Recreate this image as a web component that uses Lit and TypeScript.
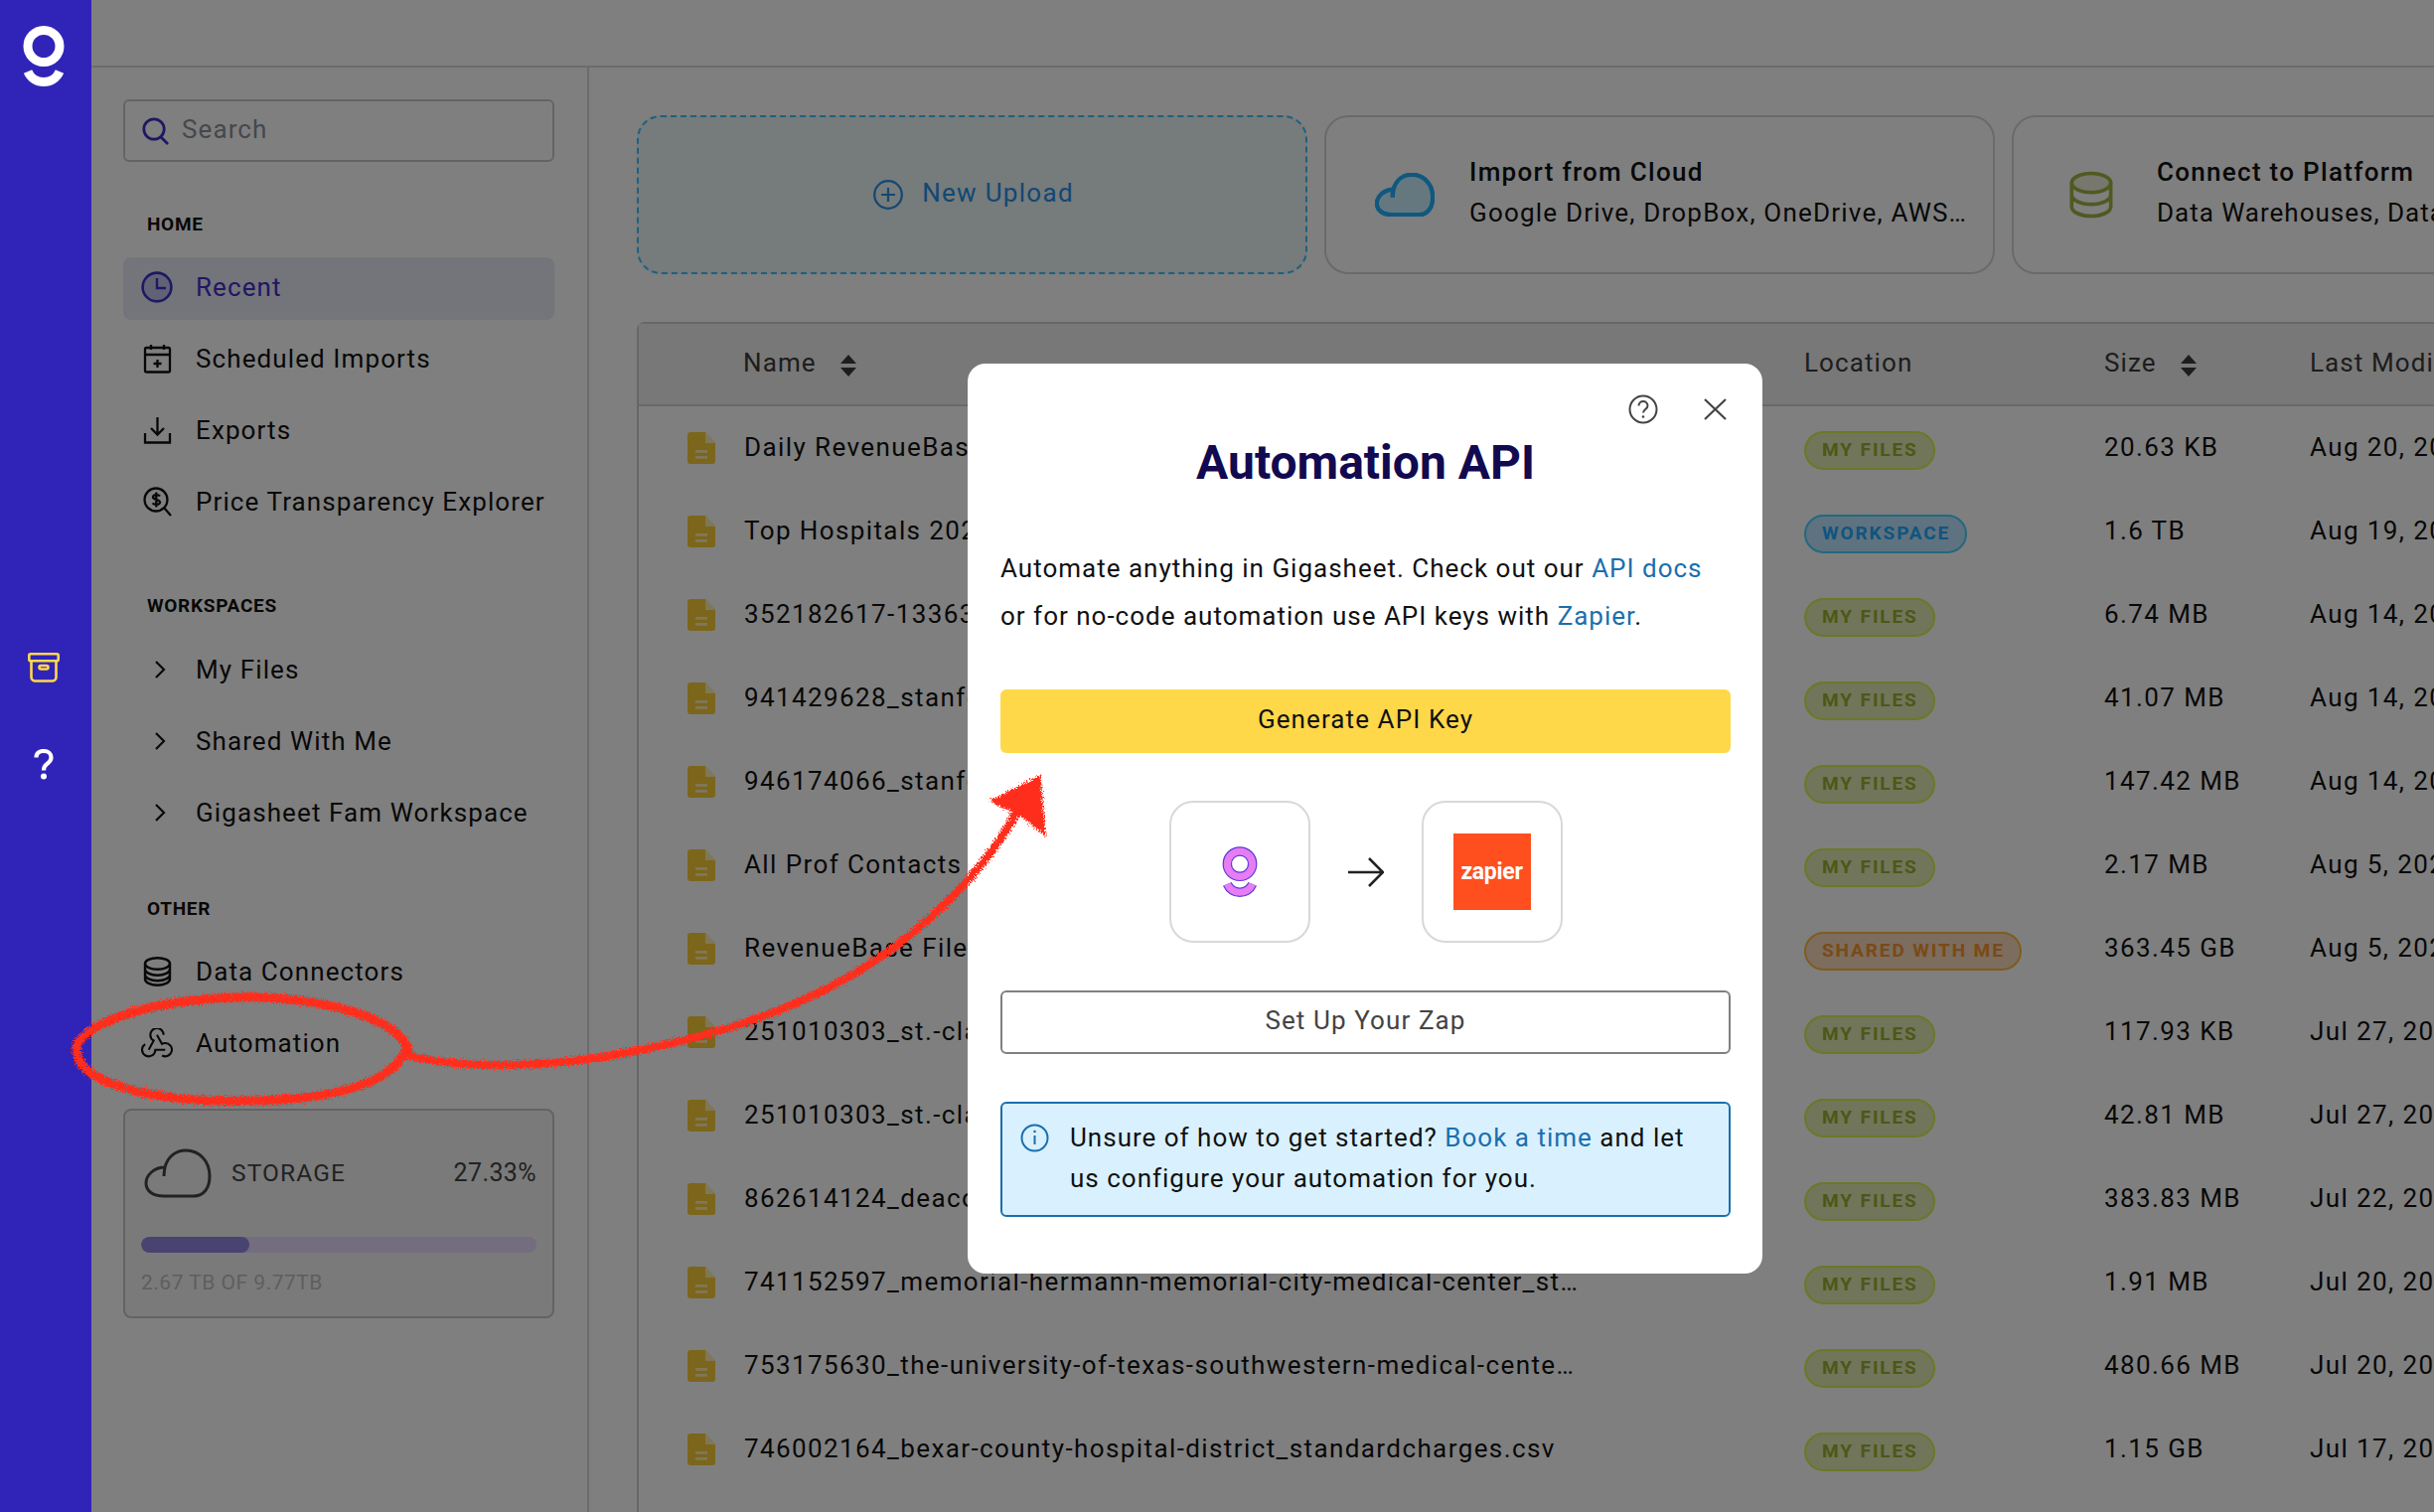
import { LitElement, css, html, svg } from "lit";
import { customElement } from "lit/decorators.js";

const rows = [
  ["Daily RevenueBase Files Summary.csv", "MY FILES", "20.63 KB", "Aug 20, 2024"],
  ["Top Hospitals 2024 Standard Charges.csv", "WORKSPACE", "1.6 TB", "Aug 19, 2024"],
  ["352182617-13363-hospital_standardcharges.csv", "MY FILES", "6.74 MB", "Aug 14, 2024"],
  ["941429628_stanford-health-care_standardcharges.csv", "MY FILES", "41.07 MB", "Aug 14, 2024"],
  ["946174066_stanford-hospital_standardcharges.csv", "MY FILES", "147.42 MB", "Aug 14, 2024"],
  ["All Prof Contacts - RevenueBase.csv", "MY FILES", "2.17 MB", "Aug 5, 2024"],
  ["RevenueBase Files", "SHARED WITH ME", "363.45 GB", "Aug 5, 2024"],
  ["251010303_st.-clair-hospital_standardcharges.csv", "MY FILES", "117.93 KB", "Jul 27, 2024"],
  ["251010303_st.-clair-hospital_charges.csv", "MY FILES", "42.81 MB", "Jul 27, 2024"],
  ["862614124_deaconess-hospital_standardcharges.csv", "MY FILES", "383.83 MB", "Jul 22, 2024"],
  ["741152597_memorial-hermann-memorial-city-medical-center_standardcharges.csv", "MY FILES", "1.91 MB", "Jul 20, 2024"],
  ["753175630_the-university-of-texas-southwestern-medical-center_standardcharges.csv", "MY FILES", "480.66 MB", "Jul 20, 2024"],
  ["746002164_bexar-county-hospital-district_standardcharges.csv", "MY FILES", "1.15 GB", "Jul 17, 2024"],
];

const pillClass: Record<string, string> = {
  "MY FILES": "pill olive",
  WORKSPACE: "pill blue",
  "SHARED WITH ME": "pill orange",
};

const clockIcon = html`<svg class="ic" width="32" height="32" viewBox="0 0 32 32"><circle cx="16" cy="16" r="14.4" fill="#c4c4ea" stroke="currentColor" stroke-width="2.6"/><path d="M16 7v10h9" fill="none" stroke="currentColor" stroke-width="2.4"/></svg>`;
const calendarIcon = html`<svg class="ic" width="32" height="30" viewBox="0 0 32 30" fill="none" stroke="currentColor" stroke-width="2.3"><rect x="4" y="4" width="25" height="24.5" rx="1.5"/><path d="M4 11h25M10 1v5M23 1v5M16.5 16v8M12.5 20h8"/></svg>`;
const exportIcon = html`<svg class="ic" width="32" height="28" viewBox="0 0 32 28" fill="none" stroke="currentColor" stroke-width="2.3"><path d="M4 17v9.5h25V17M16.5 1v17M10 12l6.5 6.5L23 12"/></svg>`;
const priceIcon = html`<svg class="ic" width="32" height="30" viewBox="0 0 32 30" fill="none" stroke="currentColor" stroke-width="2.3"><circle cx="15" cy="13" r="11.5"/><path d="M23 21l7 8"/><path d="M19 9.5c-1-1.6-6.6-2.2-7 .8-.4 3 7.2 2.2 7 5.4-.2 2.8-6 2.6-7.4.6M15.3 5.5v15"/></svg>`;
const chevron = html`<svg class="ic" width="32" height="20" viewBox="0 0 32 20" fill="none" stroke="currentColor" stroke-width="2.2"><path d="M15 2l8 8-8 8"/></svg>`;
const dbIcon = html`<svg class="ic" width="32" height="30" viewBox="0 0 32 30" fill="none" stroke="currentColor" stroke-width="2.4"><ellipse cx="16.5" cy="7" rx="12.5" ry="5.8"/><path d="M4 7v15.5c0 3.6 5.6 6.2 12.5 6.2S29 26.100 29 22.500V7M4 12.500c0 3.600 5.600 6.200 12.500 6.200S29 16.100 29 12.500M4 18c0 3.600 5.600 6.200 12.500 6.200S29 21.600 29 18"/></svg>`;
const hookIcon = html`<svg class="ic" width="32" height="30" viewBox="3 4 18 18" fill="none" stroke="currentColor" stroke-width="1.25"><path d="M4.876 13.61a4 4 0 1 0 6.124 3.39h6"/><path d="M15.066 20.502a4 4 0 1 0 1.934 -7.502c-.706 0 -1.424 .179 -2 .5l-3 -5.5"/><path d="M16 8a4 4 0 1 0 -8 0c0 1.506 .77 2.818 2 3.5l-3 5.5"/></svg>`;
const sortIcon = html`<svg class="sort" width="18" height="22" viewBox="0 0 18 22" fill="currentColor"><path d="M9 0l8 9H1zM9 22l-8-9h16z"/></svg>`;
const docIcon = html`<svg class="doc" width="28" height="32" viewBox="0 0 28 32"><path d="M3 0h15l10 11v18a3 3 0 0 1-3 3H3a3 3 0 0 1-3-3V3a3 3 0 0 1 3-3z" fill="#f8cc38"/><path d="M18 0v11h10z" fill="#fff0b0"/><path d="M8 18h12v2.800H8zM8 24h12v2.800H8z" fill="#fff0b0"/></svg>`;

const cloudPath = "M20 48H50C60 48 66 40 66 28C66 12 55 2 42 2C32 2 24 8 21 19C10 19 2 27 2 35C2 43 9 48 20 48ZM21 19C20.500 22 20 25 20 28";

const logo = (ring: string, outline?: string) => svg`
  ${outline
    ? svg`<circle cx="21" cy="20.500" r="16" fill="none" stroke=${outline} stroke-width="12"/>
          <path d="M5 46C11 60 31 60 37 46" fill="none" stroke=${outline} stroke-width="12"/>`
    : ""}
  <circle cx="21" cy="20.500" r="16" fill="none" stroke=${ring} stroke-width="9"/>
  <path d="M5 46C11 60 31 60 37 46" fill="none" stroke=${ring} stroke-width="9"/>`;

@customElement("app-root")
export class AppRoot extends LitElement {
  static styles = css`
    :host {
      display: block;
      font-family: "Roboto", "Open Sans", sans-serif;
      color: #111;
    }
    * {
      box-sizing: border-box;
    }
    .page {
      position: relative;
      display: flex;
      width: 2450px;
      height: 1522px;
      overflow: hidden;
      background: #fff;
      font-size: 26px;
      letter-spacing: 1.1px;
    }

    /* left rail */
    .rail {
      width: 92px;
      flex: none;
      background: #3024b8;
      display: flex;
      flex-direction: column;
      align-items: center;
      padding: 26px 4px 0 0;
    }
    .rail .archive {
      margin-top: 570px;
      color: #ffd84a;
    }
    .rail .help {
      margin-top: 67px;
    }

    .content {
      position: relative;
      flex: 1;
      min-width: 0;
      display: flex;
      flex-direction: column;
    }
    .topbar {
      height: 68px;
      flex: none;
      border-bottom: 2px solid #d8d8d8;
    }
    .body {
      flex: 1;
      display: flex;
      min-height: 0;
    }

    /* sidebar */
    .side {
      width: 501px;
      flex: none;
      border-right: 2px solid #d8d8d8;
      padding: 32px 33px 0 32px;
    }
    .search {
      height: 63px;
      border: 2px solid #c9c9c9;
      border-radius: 6px;
      display: flex;
      align-items: center;
      gap: 13px;
      padding: 0 0 3px 17px;
      color: #8d8f9a;
    }
    .search svg {
      color: #3f30c8;
      margin-top: 3px;
    }
    .sec {
      font-size: 19px;
      font-weight: 700;
      letter-spacing: 0.7px;
      line-height: 24px;
      padding-left: 24px;
      color: #111;
    }
    .sec.home {
      margin-top: 51px;
    }
    .sec.work {
      margin-top: 60px;
    }
    .sec.other {
      margin-top: 52px;
    }
    .nav {
      display: flex;
      flex-direction: column;
      gap: 9px;
      margin-top: 21px;
    }
    .sec.work + .nav {
      margin-top: 22px;
    }
    .row {
      height: 63px;
      display: flex;
      align-items: center;
      gap: 23px;
      padding: 0 0 3px 18px;
      border-radius: 8px;
      white-space: nowrap;
    }
    .row.on {
      background: #e8e8f6;
      color: #3f30c8;
    }
    .ic {
      flex: none;
    }
    .storage {
      height: 211px;
      margin-top: 33px;
      border: 2px solid #c6c6c6;
      border-radius: 8px;
      background: #f5f5f5;
      padding: 38px 16px 0;
    }
    .storage .head {
      display: flex;
      align-items: center;
      height: 50px;
      padding-bottom: 2px;
      color: #444;
      font-size: 24.5px;
    }
    .storage .head svg {
      margin: 2px 20px 0 3px;
    }
    .storage .pct {
      margin-left: auto;
      font-size: 25px;
      letter-spacing: 0.4px;
    }
    .track {
      height: 16px;
      margin-top: 39px;
      border-radius: 8px;
      background: #e8d8ff;
      overflow: hidden;
    }
    .fill {
      height: 100%;
      border-radius: 8px;
      background: #9086e0;
    }
    .used {
      margin-top: 18px;
      line-height: 24px;
      font-size: 21px;
      color: #bdbdbd;
      letter-spacing: 0.5px;
    }

    /* main area */
    .main {
      flex: 1;
      min-width: 0;
      overflow: hidden;
      padding: 48px 0 0 48px;
    }
    .cards {
      display: flex;
      gap: 17px;
      width: 2000px;
    }
    .card {
      width: 675px;
      height: 160px;
      flex: none;
      border: 2px solid #d4d4d4;
      border-radius: 24px;
      display: flex;
      align-items: center;
      white-space: nowrap;
    }
    .card.upload {
      background: #ecf6f7;
      border: 2px dashed #3cc0ff;
      justify-content: center;
      gap: 19px;
      padding: 0 0 5px 3px;
      letter-spacing: 1.3px;
      color: #2490e8;
    }
    .card.upload svg {
      margin-top: 4px;
    }
    .card .txt {
      min-width: 0;
      display: flex;
      flex-direction: column;
      gap: 11px;
      line-height: 30px;
      padding-bottom: 6px;
    }
    .card .txt b {
      font-weight: 500;
      letter-spacing: 1.3px;
    }
    .card .txt span {
      letter-spacing: 1px;
    }
    .card .txt .ell {
      width: 503px;
      overflow: hidden;
      text-overflow: ellipsis;
      letter-spacing: 1.2px;
    }
    .card.cloud svg {
      margin-left: 49px;
      margin-right: 35px;
      color: #20b0ff;
    }
    .card.conn svg {
      margin-left: 56px;
      margin-right: 44px;
      color: #9eb440;
    }
    .table {
      width: 2000px;
      height: 1300px;
      margin-top: 48px;
      border: solid #cfcfcf;
      border-width: 2px 0 0 2px;
      border-top-left-radius: 8px;
      letter-spacing: 1.4px;
    }
    .thead,
    .trow {
      display: grid;
      grid-template-columns: 1173px 302px 207px 1fr;
      align-items: center;
    }
    .thead {
      height: 83px;
      background: #f0f0f0;
      border-bottom: 2px solid #d0d0d0;
      color: #3a3a3a;
      letter-spacing: 1.1px;
    }
    .thead .name {
      padding-left: 105px;
    }
    .thead span {
      display: flex;
      align-items: center;
      padding-bottom: 3px;
    }
    .sort {
      margin: 5px 0 0 23px;
    }
    .trow {
      height: 84px;
    }
    .cell-name {
      display: flex;
      align-items: center;
      gap: 29px;
      padding-left: 49px;
    }
    .doc {
      flex: none;
    }
    .fname {
      width: 844px;
      white-space: nowrap;
      overflow: hidden;
      text-overflow: ellipsis;
      padding-bottom: 3px;
    }
    .sz {
      padding-bottom: 3px;
    }
    .where {
      padding-top: 4px;
    }
    .pill {
      display: inline-block;
      height: 39px;
      line-height: 33px;
      padding: 0 15px 0 16px;
      border: 2px solid;
      border-radius: 20px;
      font-size: 19px;
      font-weight: 700;
      letter-spacing: 1.9px;
      white-space: nowrap;
    }
    .olive {
      color: #9aaf30;
      border-color: #d8f04c;
      background: #e2eab4;
    }
    .blue {
      color: #20aaff;
      border-color: #44d2ff;
      background: #bfe4ff;
    }
    .orange {
      color: #f4942e;
      border-color: #ffb83c;
      background: #f8dabc;
    }
    .date {
      white-space: nowrap;
      padding-bottom: 3px;
    }

    /* modal */
    .overlay {
      position: absolute;
      inset: 0;
      background: rgba(0, 0, 0, 0.5);
    }
    .modal {
      position: absolute;
      left: 882px;
      top: 366px;
      width: 800px;
      height: 916px;
      background: #fff;
      border-radius: 18px;
      padding: 0 32px 0 33px;
      color: #111;
      letter-spacing: 1.1px;
    }
    .tools {
      position: absolute;
      top: 31px;
      right: 36px;
      display: flex;
      align-items: center;
      gap: 46px;
      color: #444;
    }
    .modal h2 {
      margin: 0;
      padding-top: 72px;
      text-align: center;
      font-size: 48px;
      line-height: 56px;
      font-weight: 700;
      letter-spacing: 0;
      color: #120a50;
    }
    .modal p {
      margin: 54px 0 0;
      font-size: 26px;
      line-height: 48px;
      letter-spacing: 1px;
      white-space: nowrap;
    }
    a {
      color: #1a6fae;
      text-decoration: none;
    }
    .btn {
      height: 64px;
      display: flex;
      align-items: center;
      justify-content: center;
      border-radius: 6px;
      padding-bottom: 4px;
    }
    .btn.gen {
      margin-top: 50px;
      background: #ffd84a;
    }
    .btn.zap {
      margin-top: 48px;
      border: 2px solid #808080;
      color: #444;
    }
    .flow {
      display: flex;
      justify-content: center;
      align-items: center;
      gap: 38px;
      margin-top: 48px;
    }
    .tile {
      width: 142px;
      height: 143px;
      border: 2px solid #d8d8d8;
      border-radius: 24px;
      display: flex;
      align-items: center;
      justify-content: center;
    }
    .zapier {
      width: 78px;
      height: 77px;
      background: #ff4f1f;
      color: #fff;
      display: flex;
      align-items: center;
      justify-content: center;
      font-size: 23px;
      font-weight: 700;
      letter-spacing: -0.3px;
    }
    .info {
      display: flex;
      gap: 21px;
      height: 116px;
      margin-top: 48px;
      padding: 14px 18px 0;
      border: 2px solid #1a6fae;
      border-radius: 6px;
      background: #d9f1fe;
      line-height: 41px;
      letter-spacing: 1px;
    }
    .info svg {
      flex: none;
      margin-top: 6px;
      color: #1a6fae;
    }

    .scribble {
      position: absolute;
      inset: 0;
      pointer-events: none;
    }
  `;

  render() {
    return html`
      <div class="page">
        <nav class="rail">
          <svg width="42" height="61" viewBox="0 0 42 61">${logo("#fff")}</svg>
          <svg class="archive" width="32" height="30" viewBox="0 0 32 30" fill="none" stroke="currentColor" stroke-width="2.6">
            <rect x="1.300" y="1.300" width="29.400" height="7" rx="1.500"/>
            <path d="M3.500 8.500v16a4 4 0 0 0 4 4h17a4 4 0 0 0 4-4v-16"/>
            <rect x="11.500" y="13" width="9" height="3.500" rx="1.700"/>
          </svg>
          <svg class="help" width="20" height="31" viewBox="0 0 20 31" fill="none">
            <path d="M2.500 8.500C2.500 4 5.500 2 9.800 2C14.500 2 17.500 4.500 17.500 8.500C17.500 12 15 13.500 13 15.200C11 16.800 10 18 10 21.500" stroke="#fff" stroke-width="4.200"/>
            <circle cx="10" cy="27.500" r="3" fill="#fff"/>
          </svg>
        </nav>

        <div class="content">
          <div class="topbar"></div>
          <div class="body">
            <aside class="side">
              <div class="search">
                <svg width="27" height="28" viewBox="0 0 27 28" fill="none" stroke="currentColor" stroke-width="2.800"><circle cx="12" cy="12" r="10.200"/><path d="M19 20l7 7"/></svg>
                Search
              </div>
              <div class="sec home">HOME</div>
              <div class="nav">
                <div class="row on">${clockIcon}Recent</div>
                <div class="row">${calendarIcon}Scheduled Imports</div>
                <div class="row">${exportIcon}Exports</div>
                <div class="row">${priceIcon}Price Transparency Explorer</div>
              </div>
              <div class="sec work">WORKSPACES</div>
              <div class="nav">
                <div class="row">${chevron}My Files</div>
                <div class="row">${chevron}Shared With Me</div>
                <div class="row">${chevron}Gigasheet Fam Workspace</div>
              </div>
              <div class="sec other">OTHER</div>
              <div class="nav">
                <div class="row">${dbIcon}Data Connectors</div>
                <div class="row">${hookIcon}Automation</div>
              </div>
              <div class="storage">
                <div class="head">
                  <svg width="68" height="50" viewBox="0 0 68 50" fill="none" stroke="currentColor" stroke-width="3"><path d=${cloudPath}/></svg>
                  STORAGE
                  <span class="pct">27.33%</span>
                </div>
                <div class="track"><div class="fill" style="width: 27.33%"></div></div>
                <div class="used">2.67 TB OF 9.77TB</div>
              </div>
            </aside>

            <main class="main">
              <div class="cards">
                <div class="card upload">
                  <svg width="30" height="30" viewBox="0 0 30 30" fill="none" stroke="currentColor" stroke-width="2.200"><circle cx="15" cy="15" r="13.800"/><path d="M15 8v14M8 15h14"/></svg>
                  New Upload
                </div>
                <div class="card cloud">
                  <svg width="60" height="44" viewBox="0 0 68 50" fill="#ccf0ff" stroke="currentColor" stroke-width="5"><path d=${cloudPath}/></svg>
                  <div class="txt"><b>Import from Cloud</b><span class="ell">Google Drive, DropBox, OneDrive, AWS, Azure, Box and more</span></div>
                </div>
                <div class="card conn">
                  <svg width="48" height="52" viewBox="0 0 48 52" fill="none" stroke="currentColor" stroke-width="4">
                    <ellipse cx="24" cy="13" rx="21.500" ry="10.500" fill="#eeeedd"/>
                    <path d="M2.500 13v26c0 6 9.600 10.500 21.500 10.500S45.500 45 45.500 39V13M2.500 26c0 6 9.600 10.500 21.500 10.500S45.500 32 45.500 26"/>
                  </svg>
                  <div class="txt"><b>Connect to Platform</b><span>Data Warehouses, Databases, CRMs and more</span></div>
                </div>
              </div>

              <div class="table">
                <div class="thead">
                  <span class="name">Name${sortIcon}</span>
                  <span>Location</span>
                  <span>Size${sortIcon}</span>
                  <span>Last Modified</span>
                </div>
                ${rows.map(
                  ([name, where, size, date]) => html`
                    <div class="trow">
                      <div class="cell-name">${docIcon}<span class="fname">${name}</span></div>
                      <div class="where"><span class=${pillClass[where]}>${where}</span></div>
                      <div class="sz">${size}</div>
                      <div class="date">${date}</div>
                    </div>
                  `
                )}
              </div>
            </main>
          </div>

          <div class="overlay">
            <div class="modal">
              <div class="tools">
                <svg width="30" height="30" viewBox="0 0 30 30" fill="none" stroke="currentColor" stroke-width="2"><circle cx="15" cy="15" r="13.500"/><path d="M10.500 11.500c0-6 9-6 9 0 0 3.500-4.500 3.500-4.500 7"/><circle cx="15" cy="22.500" r="1.300" fill="currentColor" stroke="none"/></svg>
                <svg width="23" height="22" viewBox="0 0 23 22" fill="none" stroke="currentColor" stroke-width="2.200"><path d="M1 1l21 20M22 1L1 21"/></svg>
              </div>
              <h2>Automation API</h2>
              <p>Automate anything in Gigasheet. Check out our <a>API docs</a><br />or for no-code automation use API keys with <a>Zapier</a>.</p>
              <div class="btn gen">Generate API Key</div>
              <div class="flow">
                <div class="tile">
                  <svg width="38" height="54" viewBox="-3 -3 48 68">${logo("#e87cf5", "#5a3bd8")}</svg>
                </div>
                <svg width="36" height="30" viewBox="0 0 36 30" fill="none" stroke="#222" stroke-width="2.600"><path d="M0 15h34M21 1l14 14-14 14"/></svg>
                <div class="tile"><div class="zapier">zapier</div></div>
              </div>
              <div class="btn zap">Set Up Your Zap</div>
              <div class="info">
                <svg width="29" height="29" viewBox="0 0 29 29" fill="none" stroke="currentColor" stroke-width="2"><circle cx="14.500" cy="14.500" r="13"/><path d="M14.500 12v9"/><circle cx="14.500" cy="8" r="1.300" fill="currentColor" stroke="none"/></svg>
                <div>Unsure of how to get started? <a>Book a time</a> and let<br />us configure your automation for you.</div>
              </div>
            </div>
          </div>
        </div>

        <!-- hand drawn red annotation -->
        <svg class="scribble" width="2450" height="1522" viewBox="0 0 2450 1522" fill="none" stroke="#ff2d1e" stroke-width="9" stroke-linecap="round">
          <defs>
            <filter id="rough" x="-5%" y="-5%" width="110%" height="110%">
              <feTurbulence type="fractalNoise" baseFrequency="0.9" numOctaves="2" seed="4" result="noise"/>
              <feDisplacementMap in="SourceGraphic" in2="noise" scale="9" xChannelSelector="R" yChannelSelector="G"/>
            </filter>
          </defs>
          <g filter="url(#rough)">
            <path d="M411 1062C410 1025 320 1002 240 1004C150 1006 75 1032 77 1058C79 1092 160 1110 245 1108C330 1108 400 1092 410 1052" />
            <path d="M410 1062C470 1078 560 1074 640 1058C720 1042 800 1016 860 980C935 935 1000 870 1035 795" stroke-width="8" />
            <path d="M1045 785L1002 806L1030 820L1049 835Z" fill="#ff2d1e" stroke-width="6" />
          </g>
        </svg>
      </div>
    `;
  }
}
